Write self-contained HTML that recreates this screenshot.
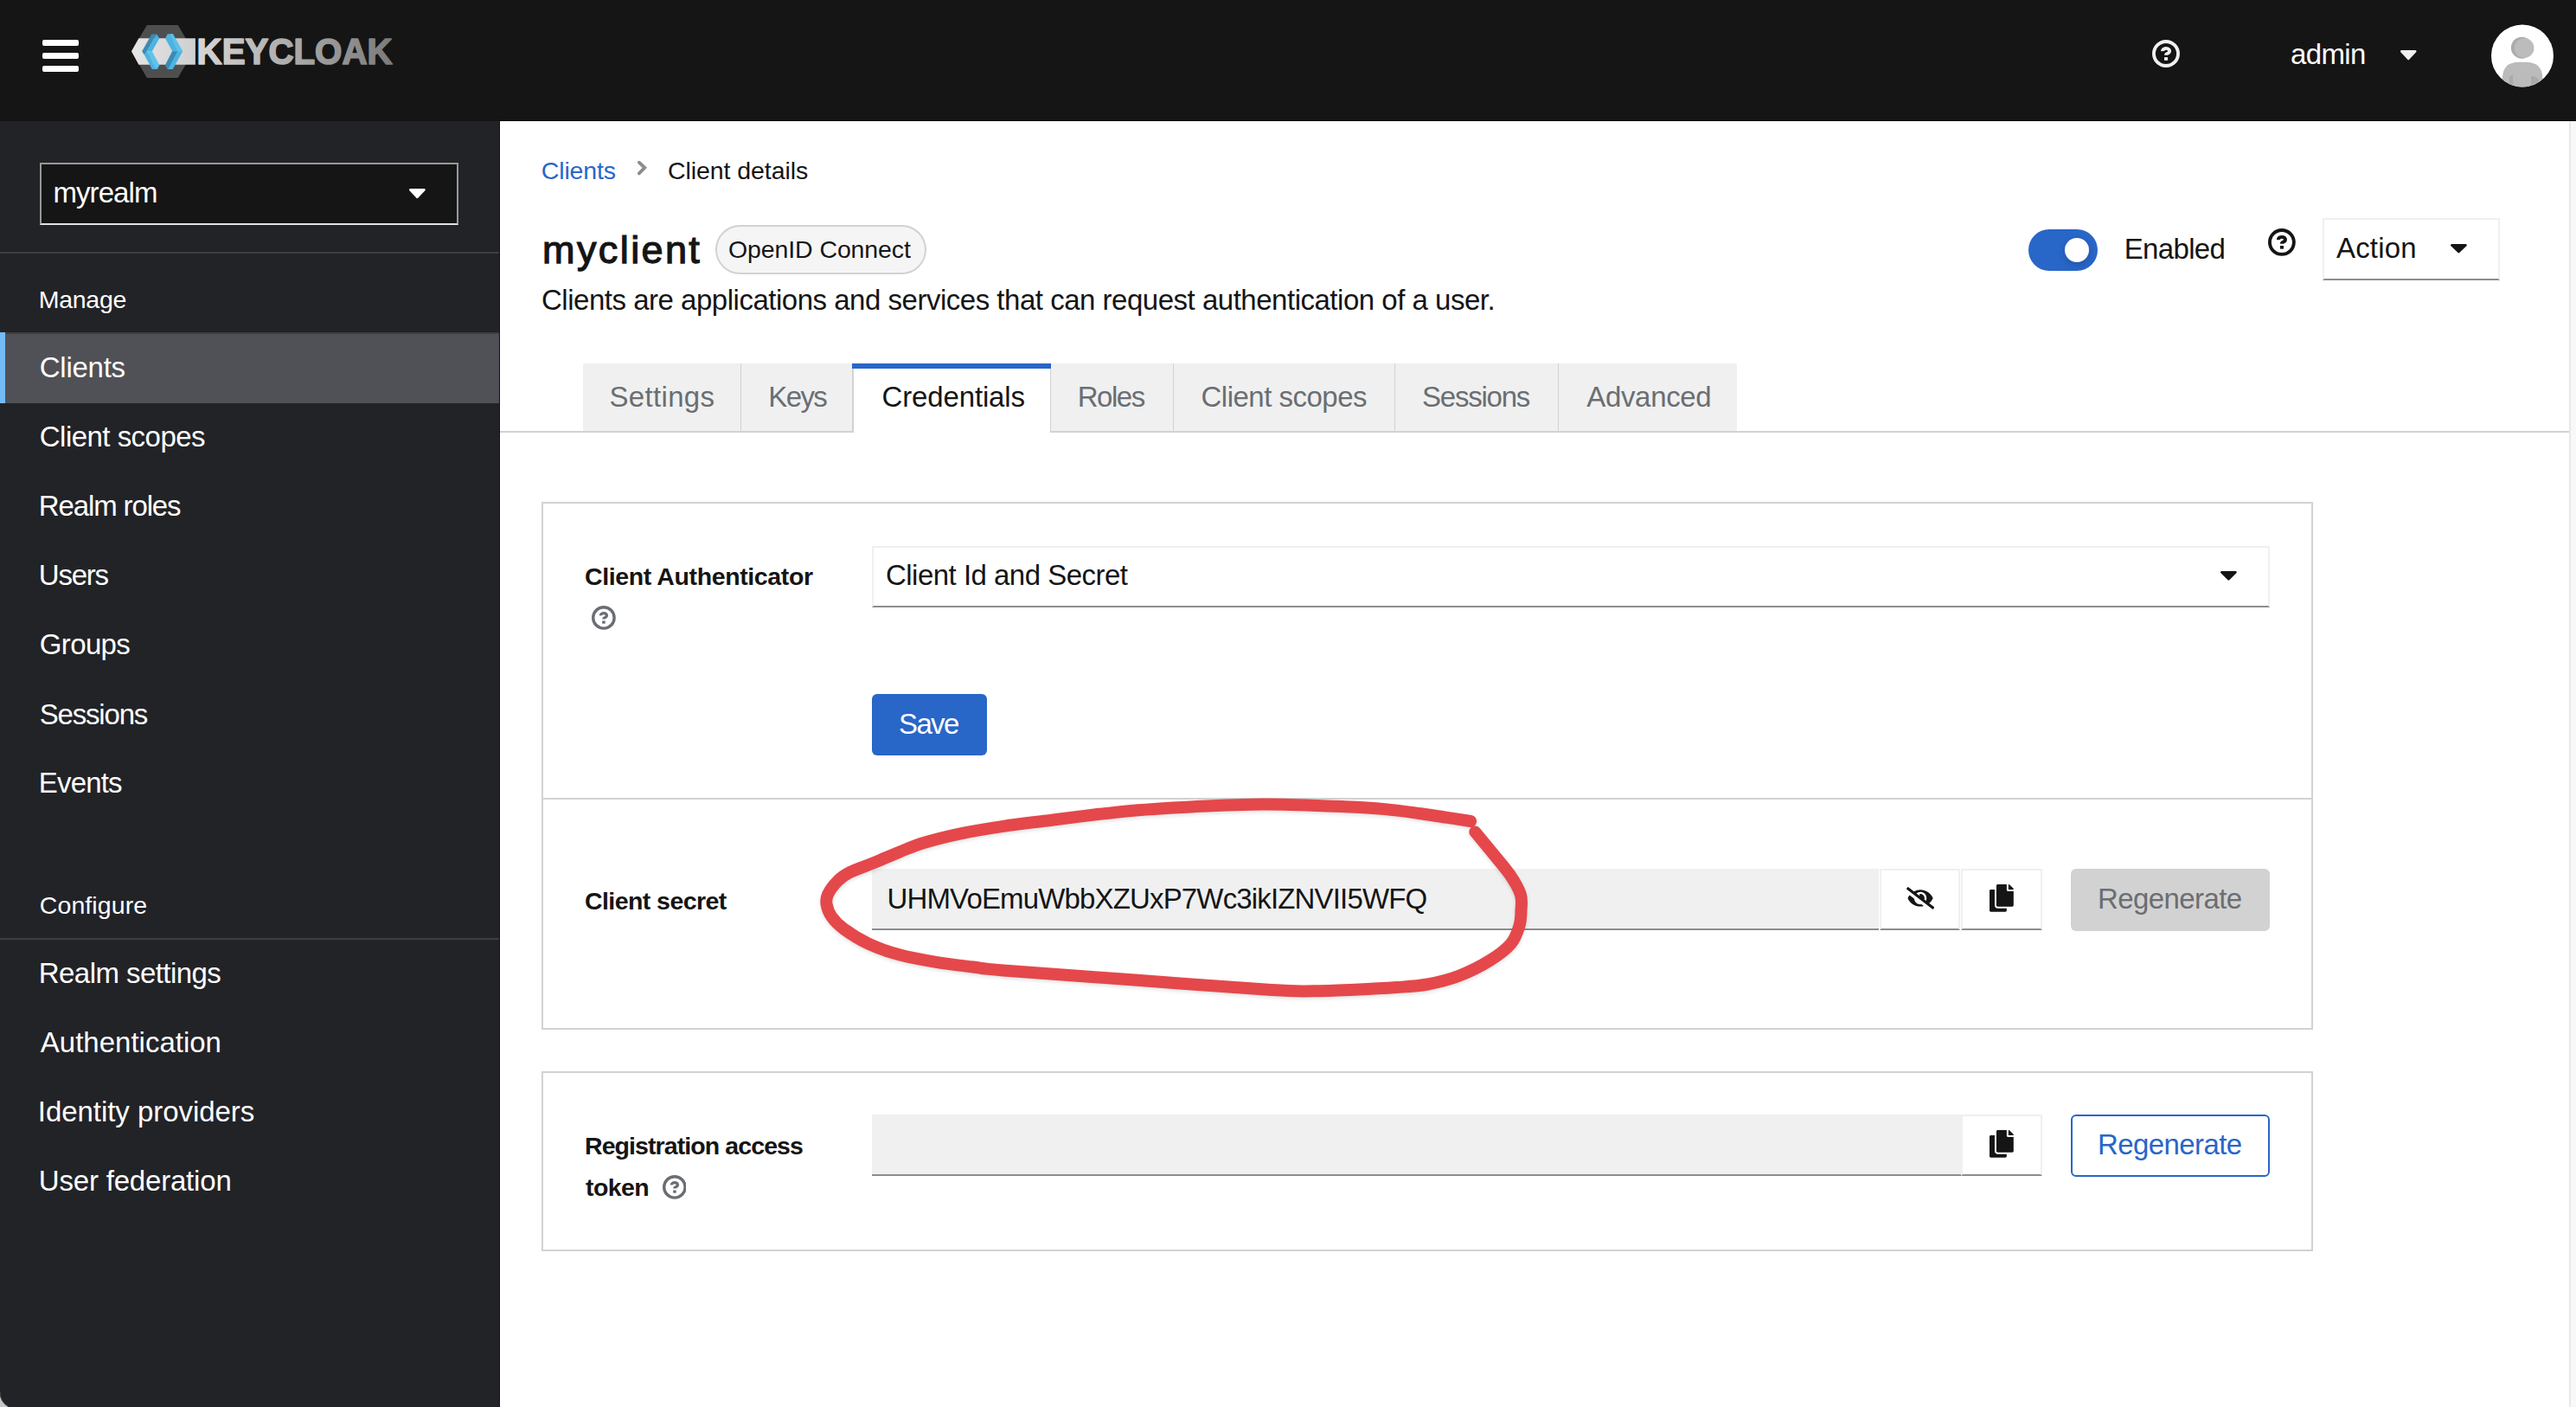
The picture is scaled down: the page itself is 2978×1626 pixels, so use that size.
<!DOCTYPE html>
<html><head><meta charset="utf-8"><title>Keycloak</title>
<style>
*{margin:0;padding:0;box-sizing:border-box;}
html,body{width:2978px;height:1626px;overflow:hidden;background:#fff;font-family:"Liberation Sans",sans-serif;color:#151515;}
.a{position:absolute;}
.t{position:absolute;white-space:nowrap;line-height:1;}
</style></head><body>
<div class="a" style="left:0px;top:0px;width:2978.00px;height:140.00px;background:#151515"></div>
<div class="a" style="left:49px;top:45.5px;width:42.00px;height:7.00px;background:#fff;border-radius:2px"></div>
<div class="a" style="left:49px;top:60.5px;width:42.00px;height:7.00px;background:#fff;border-radius:2px"></div>
<div class="a" style="left:49px;top:75.5px;width:42.00px;height:7.00px;background:#fff;border-radius:2px"></div>
<svg class="a" style="left:140px;top:20px" width="330" height="80" viewBox="140 20 330 80">
<defs><linearGradient id="kg" x1="229" y1="0" x2="455" y2="0" gradientUnits="userSpaceOnUse"><stop offset="0" stop-color="#d6d6d6"/><stop offset="0.5" stop-color="#a8a8a8"/><stop offset="1" stop-color="#7a7a7a"/></linearGradient>
<linearGradient id="bg" x1="152" y1="0" x2="226" y2="0" gradientUnits="userSpaceOnUse"><stop offset="0" stop-color="#e6e6e6"/><stop offset="1" stop-color="#cfcfcf"/></linearGradient></defs>
<polygon points="169.88,28.98 205.70,28.98 223.61,59.33 205.70,89.93 169.88,89.93 151.97,59.33" fill="#4e4e4e"/>
<polygon points="151.97,59.33 160.42,44.15 225.85,44.15 225.85,74.75 160.42,74.75" fill="url(#bg)"/>
<polygon points="164.15,59.33 175.35,39.43 181.07,39.43 169.88,59.33 166.89,63.56" fill="#3b8bb6"/>
<polygon points="169.88,59.33 181.07,39.43 184.30,44.15 175.85,59.33" fill="#4cb3e1"/>
<polygon points="166.89,63.56 169.88,59.33 184.30,75.25 182.06,79.98 175.85,79.98" fill="#4db3e1"/>
<polygon points="169.88,59.33 175.85,59.33 184.30,75.25 179.83,79.23" fill="#60c2ea"/>
<polygon points="191.02,44.15 193.76,39.18 199.73,39.18 211.17,59.33 199.23,59.33" fill="#4cb3e1"/>
<polygon points="196.74,39.18 199.73,39.18 211.17,59.33 205.20,59.33" fill="#5ec1e9"/>
<polygon points="199.23,59.33 211.17,59.33 199.73,79.98 194.00,79.98 191.02,75.25" fill="#4db3e1"/>
<polygon points="199.23,59.33 205.20,59.33 194.25,79.98 194.00,79.98 191.02,75.25" fill="#3b8bb6"/>
<text x="227.6" y="74" font-family="Liberation Sans" font-weight="bold" font-size="42.2" textLength="226" lengthAdjust="spacingAndGlyphs" fill="url(#kg)" stroke="url(#kg)" stroke-width="1.7" stroke-linejoin="round">KEYCLOAK</text>
</svg><svg class="a" style="left:2488.00px;top:46.10px" width="32.00" height="32.00" viewBox="-16 -16 32 32"><circle r="14.05" fill="none" stroke="#f0f0f0" stroke-width="3.9"/><path d="M -4,-2.9 A 4.05,3.05 0 1 1 2.3,-0.5 Q 0.05,0.4 0.05,0.9 L 0.05,1.8" fill="none" stroke="#f0f0f0" stroke-width="3.9"/><rect x="-2" y="4.1" width="4.1" height="3.7" fill="#f0f0f0"/></svg><div class="t" style="left:2648.00px;top:46.07px;font-size:33px;color:#fff;letter-spacing:-0.632px;">admin</div>
<svg class="a" style="left:2772.5px;top:55.5px" width="22.50" height="15.50" viewBox="2772.5 55.5 22.50 15.50"><polygon points="2775.80,58.80 2791.70,58.80 2783.75,67.44" fill="#f0f0f0" stroke="#f0f0f0" stroke-width="2.6" stroke-linejoin="round"/></svg><svg class="a" style="left:2878px;top:26px" width="76" height="77" viewBox="2878 26 76 77">
<defs><clipPath id="avc"><circle cx="2916" cy="64.4" r="36"/></clipPath></defs>
<circle cx="2916" cy="64.4" r="36" fill="#ffffff"/>
<g clip-path="url(#avc)">
<circle cx="2915.4" cy="55.2" r="12.5" fill="#acacac"/>
<circle cx="2918.2" cy="55.6" r="11.3" fill="#bcbcbc"/>
<path d="M2893 110 L2893 90 C2893 78 2900 71.8 2912 71.8 L2920 71.8 C2932 71.8 2939.3 78 2939.3 90 L2939.3 110 Z" fill="#bbbbbb"/>
<path d="M2900.8 110 L2900.8 92 C2900.8 89 2902 87 2905 86.6 L2905 110 Z" fill="#aaaaaa"/>
<path d="M2926 110 L2926 88 C2930 88 2934 90 2935 93 L2935 110 Z" fill="#aaaaaa"/>
</g></svg><div class="a" style="left:0px;top:140px;width:578.00px;height:1486.00px;background:#222327"></div>
<div class="a" style="left:577px;top:140px;width:1.00px;height:1486.00px;background:#111215"></div>
<div class="a" style="left:46px;top:187.5px;width:484.00px;height:72.50px;background:#151515;border:2px solid #96989b;border-bottom:2px solid #e2e2e2"></div>
<div class="t" style="left:61.40px;top:206.07px;font-size:33px;color:#fff;letter-spacing:-0.903px;">myrealm</div>
<svg class="a" style="left:470.8px;top:215.5px" width="22.70" height="15.50" viewBox="470.8 215.5 22.70 15.50"><polygon points="474.10,218.80 490.20,218.80 482.15,227.44" fill="#fff" stroke="#fff" stroke-width="2.6" stroke-linejoin="round"/></svg><div class="a" style="left:0px;top:291px;width:577.00px;height:2.00px;background:#3d3e43"></div>
<div class="t" style="left:44.75px;top:331.62px;font-size:28.5px;color:#fff;letter-spacing:-0.278px;">Manage</div>
<div class="a" style="left:0px;top:384px;width:577.00px;height:82.00px;background:#505156"></div>
<div class="a" style="left:0px;top:384px;width:577.00px;height:2.00px;background:#3d3e43"></div>
<div class="a" style="left:0px;top:384px;width:6.00px;height:82.00px;background:#73bcf7"></div>
<div class="t" style="left:45.80px;top:408.07px;font-size:33px;color:#fff;letter-spacing:-0.270px;">Clients</div>
<div class="t" style="left:45.80px;top:488.07px;font-size:33px;color:#fff;letter-spacing:-0.529px;">Client scopes</div>
<div class="t" style="left:44.80px;top:568.07px;font-size:33px;color:#fff;letter-spacing:-1.130px;">Realm roles</div>
<div class="t" style="left:44.80px;top:648.07px;font-size:33px;color:#fff;letter-spacing:-1.231px;">Users</div>
<div class="t" style="left:45.80px;top:728.37px;font-size:33px;color:#fff;letter-spacing:-0.643px;">Groups</div>
<div class="t" style="left:45.80px;top:808.57px;font-size:33px;color:#fff;letter-spacing:-1.200px;">Sessions</div>
<div class="t" style="left:44.80px;top:888.27px;font-size:33px;color:#fff;letter-spacing:-0.817px;">Events</div>
<div class="t" style="left:45.75px;top:1031.87px;font-size:28.5px;color:#fff;letter-spacing:0.097px;">Configure</div>
<div class="a" style="left:0px;top:1083.5px;width:577.00px;height:2.00px;background:#3d3e43"></div>
<div class="t" style="left:44.80px;top:1107.82px;font-size:33px;color:#fff;letter-spacing:-0.558px;">Realm settings</div>
<div class="t" style="left:46.80px;top:1187.82px;font-size:33px;color:#fff;">Authentication</div>
<div class="t" style="left:43.80px;top:1268.37px;font-size:33px;color:#fff;letter-spacing:-0.046px;">Identity providers</div>
<div class="t" style="left:44.80px;top:1347.67px;font-size:33px;color:#fff;letter-spacing:-0.190px;">User federation</div>
<svg class="a" style="left:0;top:1606px" width="20" height="20" viewBox="0 1606 20 20"><path d="M0,1608.5 A20,20 0 0 0 10.2,1626 L0,1626 Z" fill="#c6c6c6"/><path d="M0,1608.5 A20,20 0 0 0 10.2,1626" fill="none" stroke="#444" stroke-width="1"/></svg>
<div class="a" style="left:578px;top:139px;width:2400.00px;height:1.00px;background:#000"></div>
<div class="t" style="left:625.75px;top:182.87px;font-size:28.5px;color:#2866c8;letter-spacing:-0.144px;">Clients</div>
<svg class="a" style="left:734px;top:184px" width="16" height="21" viewBox="734 184 16 21"><polyline points="738.8,187.7 745.3,193.9 738.8,200.4" fill="none" stroke="#8a8d90" stroke-width="3.8" stroke-linecap="round" stroke-linejoin="miter"/></svg>
<div class="t" style="left:772.00px;top:182.87px;font-size:28.5px;color:#151515;letter-spacing:-0.070px;">Client details</div>
<div class="t" style="left:627.10px;top:266.11px;font-size:45px;color:#151515;letter-spacing:2.388px;-webkit-text-stroke:1.25px #151515;">myclient</div>
<div class="a" style="left:827px;top:259.5px;width:244.00px;height:57.00px;background:#f5f5f5;border:2px solid #d2d2d2;border-radius:30px"></div>
<div class="t" style="left:842.00px;top:273.87px;font-size:28.5px;color:#151515;letter-spacing:-0.105px;">OpenID Connect</div>
<div class="t" style="left:626.00px;top:329.57px;font-size:33px;color:#151515;letter-spacing:-0.485px;">Clients are applications and services that can request authentication of a user.</div>
<div class="a" style="left:2345px;top:265px;width:80.00px;height:47.50px;background:#2866c8;border-radius:24px;overflow:hidden"></div>
<div class="a" style="left:2387px;top:274.75px;width:28.00px;height:28.00px;background:#fff;border-radius:50%;box-shadow:0 3px 10px rgba(0,0,0,0.18)"></div>
<div class="t" style="left:2455.75px;top:270.82px;font-size:33px;color:#151515;letter-spacing:-0.667px;">Enabled</div>
<svg class="a" style="left:2622.10px;top:264.10px" width="31.80" height="31.80" viewBox="-16 -16 32 32"><circle r="14.05" fill="none" stroke="#151515" stroke-width="3.9"/><path d="M -4,-2.9 A 4.05,3.05 0 1 1 2.3,-0.5 Q 0.05,0.4 0.05,0.9 L 0.05,1.8" fill="none" stroke="#151515" stroke-width="3.9"/><rect x="-2" y="4.1" width="4.1" height="3.7" fill="#151515"/></svg><div class="a" style="left:2685px;top:252px;width:205.00px;height:72.00px;background:#fff;border:2px solid #f0f0f0;border-bottom:2px solid #8a8d90"></div>
<div class="t" style="left:2701.00px;top:270.07px;font-size:33px;color:#151515;letter-spacing:0.177px;">Action</div>
<svg class="a" style="left:2830.6px;top:280px" width="22.80" height="14.60" viewBox="2830.6 280 22.80 14.60"><polygon points="2833.90,283.30 2850.10,283.30 2842.00,291.04" fill="#151515" stroke="#151515" stroke-width="2.6" stroke-linejoin="round"/></svg><div class="a" style="left:578px;top:498px;width:2392.00px;height:2.00px;background:#d2d2d2"></div>
<div class="a" style="left:674px;top:420px;width:183.00px;height:78.00px;background:#f0f0f0"></div>
<div class="a" style="left:856px;top:420px;width:2.00px;height:78.00px;background:#d2d2d2"></div>
<div class="t" style="left:704.50px;top:442.07px;font-size:33px;color:#6a6e73;letter-spacing:0.323px;">Settings</div>
<div class="a" style="left:857px;top:420px;width:129.00px;height:78.00px;background:#f0f0f0"></div>
<div class="a" style="left:985px;top:420px;width:2.00px;height:78.00px;background:#d2d2d2"></div>
<div class="t" style="left:888.30px;top:442.07px;font-size:33px;color:#6a6e73;letter-spacing:-1.621px;">Keys</div>
<div class="a" style="left:985px;top:420px;width:231.00px;height:80.00px;background:#fff;border-left:2px solid #d2d2d2;border-right:2px solid #d2d2d2"></div>
<div class="a" style="left:985px;top:420px;width:231.00px;height:6.00px;background:#2866c8"></div>
<div class="t" style="left:1019.50px;top:442.07px;font-size:33px;color:#151515;letter-spacing:-0.142px;">Credentials</div>
<div class="a" style="left:1215px;top:420px;width:142.00px;height:78.00px;background:#f0f0f0"></div>
<div class="a" style="left:1356px;top:420px;width:2.00px;height:78.00px;background:#d2d2d2"></div>
<div class="t" style="left:1245.75px;top:442.07px;font-size:33px;color:#6a6e73;letter-spacing:-1.467px;">Roles</div>
<div class="a" style="left:1357px;top:420px;width:256.00px;height:78.00px;background:#f0f0f0"></div>
<div class="a" style="left:1612px;top:420px;width:2.00px;height:78.00px;background:#d2d2d2"></div>
<div class="t" style="left:1388.50px;top:442.07px;font-size:33px;color:#6a6e73;letter-spacing:-0.508px;">Client scopes</div>
<div class="a" style="left:1613px;top:420px;width:189.00px;height:78.00px;background:#f0f0f0"></div>
<div class="a" style="left:1801px;top:420px;width:2.00px;height:78.00px;background:#d2d2d2"></div>
<div class="t" style="left:1644.00px;top:442.07px;font-size:33px;color:#6a6e73;letter-spacing:-1.236px;">Sessions</div>
<div class="a" style="left:1802px;top:420px;width:206.00px;height:78.00px;background:#f0f0f0"></div>
<div class="t" style="left:1834.30px;top:442.07px;font-size:33px;color:#6a6e73;letter-spacing:-0.346px;">Advanced</div>
<div class="a" style="left:626px;top:580px;width:2048.00px;height:609.50px;border:2px solid #d2d2d2"></div>
<div class="a" style="left:626px;top:921.5px;width:2048.00px;height:2.00px;background:#d2d2d2"></div>
<div class="t" style="left:676.00px;top:652.12px;font-size:28.5px;color:#151515;font-weight:bold;letter-spacing:-0.381px;">Client Authenticator</div>
<svg class="a" style="left:684.10px;top:700.10px" width="27.80" height="27.80" viewBox="-16 -16 32 32"><circle r="14.05" fill="none" stroke="#6a6e73" stroke-width="3.9"/><path d="M -4,-2.9 A 4.05,3.05 0 1 1 2.3,-0.5 Q 0.05,0.4 0.05,0.9 L 0.05,1.8" fill="none" stroke="#6a6e73" stroke-width="3.9"/><rect x="-2" y="4.1" width="4.1" height="3.7" fill="#6a6e73"/></svg><div class="a" style="left:1008px;top:631px;width:1616.00px;height:71.00px;background:#fff;border:2px solid #f0f0f0;border-bottom:2px solid #8a8d90"></div>
<div class="t" style="left:1024.00px;top:648.32px;font-size:33px;color:#151515;letter-spacing:-0.522px;">Client Id and Secret</div>
<svg class="a" style="left:2564.5px;top:657.5px" width="22.75" height="15.00" viewBox="2564.5 657.5 22.75 15.00"><polygon points="2567.80,660.80 2583.95,660.80 2575.88,668.94" fill="#151515" stroke="#151515" stroke-width="2.6" stroke-linejoin="round"/></svg><div class="a" style="left:1008px;top:802px;width:133.25px;height:71.25px;background:#2866c8;border-radius:6px"></div>
<div class="t" style="left:1039.00px;top:819.57px;font-size:33px;color:#fff;letter-spacing:-1.621px;">Save</div>
<div class="t" style="left:676.00px;top:1026.87px;font-size:28.5px;color:#151515;font-weight:bold;letter-spacing:-0.569px;">Client secret</div>
<div class="a" style="left:1008px;top:1004px;width:1164.00px;height:71.00px;background:#f0f0f0;border-bottom:2px solid #8a8d90"></div>
<div class="t" style="left:1025.50px;top:1022.07px;font-size:33px;color:#151515;letter-spacing:-0.847px;">UHMVoEmuWbbXZUxP7Wc3ikIZNVII5WFQ</div>
<div class="a" style="left:2173px;top:1004px;width:93.00px;height:71.00px;background:#fff;border:2px solid #f0f0f0;border-bottom:2px solid #8a8d90"></div>
<svg class="a" style="left:2204px;top:1025px" width="32.1" height="25.9" viewBox="0 0 640 512" fill="#151515"><path d="M320 400c-75.85 0-137.25-58.71-142.9-133.11L72.2 185.82c-13.79 17.3-26.48 35.590-36.72 55.59a32.35 32.35 0 0 0 0 29.19C89.71 376.41 197.07 448 320 448c26.91 0 52.87-4 77.89-10.46L346 397.39a144.13 144.13 0 0 1-26 2.61zm313.82 58.1l-110.55-85.44a331.25 331.25 0 0 0 81.25-102.070 32.35 32.35 0 0 0 0-29.19C550.29 135.59 442.93 64 320 64a308.150 308.15 0 0 0-147.32 37.7L45.46 3.37A16 16 0 0 0 23 6.18L3.37 31.45A16 16 0 0 0 6.18 53.9l588.36 454.73a16 16 0 0 0 22.46-2.81l19.64-25.27a16 16 0 0 0-2.82-22.45zm-183.72-142l-39.3-30.38A94.75 94.75 0 0 0 416 256a94.76 94.76 0 0 0-121.31-92.21A47.65 47.65 0 0 1 304 192a46.64 46.64 0 0 1-1.54 10l-73.61-56.890A142.31 142.31 0 0 1 320 112a143.920 143.92 0 0 1 144 144c0 21.63-5.29 41.79-13.9 60.11z"/></svg><div class="a" style="left:2267px;top:1004px;width:94.00px;height:71.00px;background:#fff;border:2px solid #f0f0f0;border-bottom:2px solid #8a8d90"></div>
<svg class="a" style="left:2300.1px;top:1022px" width="27.8" height="31.8" viewBox="0 0 448 512" fill="#151515"><path d="M320 448v40c0 13.255-10.745 24-24 24H24c-13.255 0-24-10.745-24-24V120c0-13.255 10.745-24 24-24h72v296c0 30.879 25.121 56 56 56h168zm0-344V0H152c-13.255 0-24 10.745-24 24v368c0 13.255 10.745 24 24 24h272c13.255 0 24-10.745 24-24V128H344c-13.2 0-24-10.8-24-24zm120.971-31.029L375.029 7.029A24 24 0 0 0 358.059 0H352v96h96v-6.059a24 24 0 0 0-7.029-16.97z"/></svg><div class="a" style="left:2394px;top:1004px;width:230.00px;height:71.50px;background:#d2d2d2;border-radius:6px"></div>
<div class="t" style="left:2425.00px;top:1022.07px;font-size:33px;color:#6a6e73;letter-spacing:-0.590px;">Regenerate</div>
<div class="a" style="left:626px;top:1238px;width:2048.00px;height:207.50px;border:2px solid #d2d2d2"></div>
<div class="t" style="left:676.00px;top:1310.37px;font-size:28.5px;color:#151515;font-weight:bold;letter-spacing:-0.913px;">Registration access</div>
<div class="t" style="left:677.00px;top:1358.37px;font-size:28.5px;color:#151515;font-weight:bold;letter-spacing:-0.588px;">token</div>
<svg class="a" style="left:765.60px;top:1357.85px" width="27.80" height="27.80" viewBox="-16 -16 32 32"><circle r="14.05" fill="none" stroke="#6a6e73" stroke-width="3.9"/><path d="M -4,-2.9 A 4.05,3.05 0 1 1 2.3,-0.5 Q 0.05,0.4 0.05,0.9 L 0.05,1.8" fill="none" stroke="#6a6e73" stroke-width="3.9"/><rect x="-2" y="4.1" width="4.1" height="3.7" fill="#6a6e73"/></svg><div class="a" style="left:1008px;top:1288px;width:1259.00px;height:71.00px;background:#f0f0f0;border-bottom:2px solid #8a8d90"></div>
<div class="a" style="left:2267px;top:1288px;width:94.00px;height:71.00px;background:#fff;border:2px solid #f0f0f0;border-bottom:2px solid #8a8d90"></div>
<svg class="a" style="left:2300.1px;top:1306px" width="27.8" height="31.8" viewBox="0 0 448 512" fill="#151515"><path d="M320 448v40c0 13.255-10.745 24-24 24H24c-13.255 0-24-10.745-24-24V120c0-13.255 10.745-24 24-24h72v296c0 30.879 25.121 56 56 56h168zm0-344V0H152c-13.255 0-24 10.745-24 24v368c0 13.255 10.745 24 24 24h272c13.255 0 24-10.745 24-24V128H344c-13.2 0-24-10.8-24-24zm120.971-31.029L375.029 7.029A24 24 0 0 0 358.059 0H352v96h96v-6.059a24 24 0 0 0-7.029-16.97z"/></svg><div class="a" style="left:2394px;top:1288px;width:230.00px;height:71.70px;background:#fff;border:2px solid #2866c8;border-radius:6px"></div>
<div class="t" style="left:2425.00px;top:1305.57px;font-size:33px;color:#2866c8;letter-spacing:-0.590px;">Regenerate</div>
<svg class="a" style="left:900px;top:880px;filter:drop-shadow(0 2px 2px rgba(0,0,0,0.12))" width="920" height="320" viewBox="900 880 920 320">
<path d="M1700.1,949.0 C1695.6,948.3 1682.9,946.4 1673.3,944.9 C1663.7,943.4 1654.4,941.8 1642.4,940.2 C1630.4,938.6 1615.8,936.4 1601.2,935.1 C1586.6,933.8 1577.9,933.2 1554.8,932.2 C1531.7,931.2 1491.5,929.4 1462.4,929.4 C1433.3,929.4 1407.1,930.8 1380.0,932.2 C1352.9,933.6 1328.4,934.9 1299.6,937.7 C1270.8,940.5 1230.5,945.9 1207.2,948.8 C1183.9,951.6 1176.1,952.4 1160.0,954.8 C1143.9,957.2 1125.8,960.1 1110.5,963.3 C1095.2,966.5 1079.7,970.4 1067.9,974.0 C1056.1,977.6 1049.0,980.9 1039.5,984.7 C1030.0,988.5 1020.6,992.8 1011.1,996.7 C1001.6,1000.6 989.7,1004.5 982.6,1008.1 C975.5,1011.7 972.7,1013.8 968.4,1018.1 C964.1,1022.4 959.1,1029.2 957.0,1033.7 C954.9,1038.2 954.9,1040.8 955.6,1045.1 C956.3,1049.4 958.0,1054.6 961.3,1059.3 C964.6,1064.0 968.4,1068.3 975.5,1073.5 C982.6,1078.7 993.3,1085.6 1004.0,1090.6 C1014.7,1095.6 1026.5,1099.8 1039.5,1103.3 C1052.5,1106.8 1067.9,1109.5 1082.1,1111.9 C1096.3,1114.3 1111.8,1115.9 1124.8,1117.5 C1137.8,1119.1 1128.3,1119.0 1160.0,1121.5 C1191.7,1124.0 1263.3,1129.0 1315.0,1132.8 C1366.7,1136.6 1436.2,1142.0 1470.0,1144.1 C1503.8,1146.2 1502.0,1145.4 1518.1,1145.3 C1534.1,1145.2 1550.2,1144.4 1566.3,1143.7 C1582.3,1143.0 1600.4,1142.1 1614.4,1141.1 C1628.4,1140.1 1638.5,1139.7 1650.5,1137.5 C1662.5,1135.3 1674.6,1132.4 1686.6,1127.8 C1698.6,1123.2 1712.7,1116.0 1722.7,1109.8 C1732.7,1103.6 1741.2,1097.1 1746.8,1090.5 C1752.4,1083.9 1754.5,1076.5 1756.4,1070.1 C1758.4,1063.7 1758.3,1058.1 1758.5,1052.0 C1758.7,1045.9 1760.0,1040.4 1757.8,1033.5 C1755.6,1026.6 1751.0,1018.9 1745.5,1010.8 C1740.0,1002.7 1731.6,993.3 1724.9,985.1 C1718.2,976.9 1708.6,965.4 1705.3,961.4" fill="none" stroke="#e4484b" stroke-width="14" stroke-linecap="round" stroke-linejoin="round"/></svg><div class="a" style="left:2970px;top:140px;width:8.00px;height:1486.00px;background:#f8f8f8;border-left:2px solid #e8e8e8"></div>
</body></html>
